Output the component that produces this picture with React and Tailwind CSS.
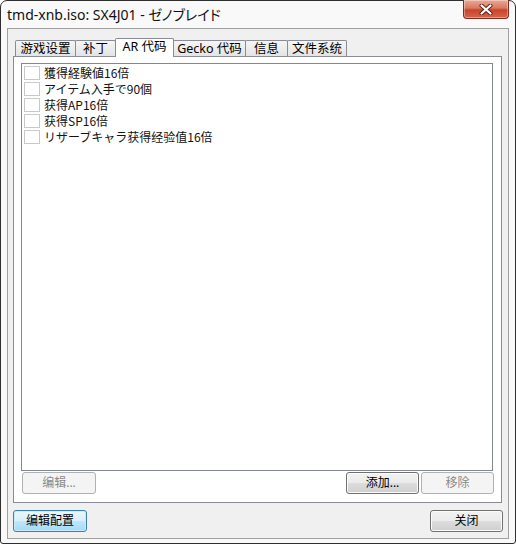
import React from 'react';

const tabs = [
  { label: '游戏设置', w: 61 },
  { label: '补丁', w: 41 },
  { label: 'AR 代码', w: 59, active: true },
  { label: 'Gecko 代码', w: 73 },
  { label: '信息', w: 43 },
  { label: '文件系统', w: 60 },
];

const codes = [
  '獲得経験値16倍',
  'アイテム入手で90個',
  '获得AP16倍',
  '获得SP16倍',
  'リザーブキャラ获得经验值16倍',
];

function CloseButton() {
  return (
    <div className="-mt-px mr-[6px] w-[46px] h-[19px] rounded-b-[4px] border border-t-0 border-[#7d2d1f] bg-[linear-gradient(#eba996,#dc7760_45%,#c5452c_55%,#d5664b)] shadow-[inset_0_0_0_1px_rgba(255,255,255,0.35)] flex items-center justify-center">
      <svg width="14" height="11" viewBox="0 0 14 11">
        <path d="M2.5 1.5 L11.5 9.5 M11.5 1.5 L2.5 9.5" stroke="#5a1f14" strokeWidth="4" strokeLinecap="round" />
        <path d="M2.5 1.5 L11.5 9.5 M11.5 1.5 L2.5 9.5" stroke="#ffffff" strokeWidth="2.2" strokeLinecap="round" />
      </svg>
    </div>
  );
}

function Button({ children, width, disabled, primary }) {
  let look = 'border-[#707070] bg-[linear-gradient(#f2f2f2_0%,#ebebeb_50%,#dddddd_50%,#cfcfcf_100%)] shadow-[inset_0_0_0_1px_#fcfcfc] text-black';
  if (disabled) look = 'border-[#adb2b5] bg-[#f4f4f4] text-[#8a8a8a]';
  if (primary) look = 'border-[#3c7fb1] bg-[linear-gradient(#eaf6fd_0%,#d9f0fc_50%,#bee6fd_50%,#a7d9f5_100%)] shadow-[inset_0_0_0_1px_#c9ecfd] text-black';
  return (
    <div
      className={`h-[22px] rounded-[3px] border flex items-center justify-center text-[12px] leading-none ${look}`}
      style={{ width }}
    >
      {children}
    </div>
  );
}

export default function App() {
  return (
    <div className="w-[516px] h-[546px] bg-white text-black font-['Noto_Sans','Noto_Sans_CJK_SC',sans-serif]">
      <div className="w-[516px] h-[544px] border border-[#2f2f2f] rounded-t-[7px] rounded-b-[3px] bg-[#f9f9f9] flex flex-col">
        {/* title bar */}
        <div className="h-[27px] shrink-0 flex items-start justify-between">
          <div className="pl-[6px] pt-[4px] text-[14px] leading-[18px] text-[#111]">
            tmd-xnb.iso: SX4J01 -{' '}
            <span className="font-['Noto_Sans_CJK_JP',sans-serif] [font-feature-settings:'palt']">ゼノブレイド</span>
          </div>
          <CloseButton />
        </div>

        {/* client area */}
        <div className="mx-[6px] h-[511px] border border-[#a0a0a0] bg-[#f0f0f0] flex flex-col">
          {/* tab strip */}
          <div className="h-[27px] shrink-0 flex items-end pl-[7px]">
            {tabs.map((t, i) => (
              <div
                key={t.label}
                className={
                  'flex items-center justify-center text-[12.5px] leading-none border border-b-0 border-[#898c95] rounded-t-[2px] ' +
                  (i > 0 ? '-ml-px ' : '') +
                  (t.active
                    ? 'relative z-10 h-[19px] -mb-px bg-white pb-[2px]'
                    : 'h-[16px] bg-[linear-gradient(#f5f5f5,#e4e4e4)] pt-px')
                }
                style={{ width: t.w }}
              >
                {t.label}
              </div>
            ))}
          </div>

          {/* tab panel */}
          <div className="ml-[5px] w-[489px] h-[447px] shrink-0 border border-[#898c95] bg-white flex flex-col">
            <div className="ml-[7px] mt-[6px] w-[472px] h-[408px] border border-[#828790] bg-white pt-[1px] pl-[2px]">
              {codes.map((c) => (
                <div key={c} className="h-[16px] flex items-center gap-[4px]">
                  <div className="w-[16px] h-[14px] border border-[#c9c9c9] bg-white" />
                  <span className="text-[12px] leading-none text-[#111] font-['Noto_Sans_CJK_SC',sans-serif]">{c}</span>
                </div>
              ))}
            </div>
            <div className="mt-[1px] flex items-center pl-[8px] pr-[7px]">
              <Button width={74} disabled>编辑...</Button>
              <div className="flex-1" />
              <Button width={73}>添加...</Button>
              <div className="w-[2px]" />
              <Button width={73} disabled>移除</Button>
            </div>
          </div>

          {/* bottom buttons */}
          <div className="mt-[7px] flex items-center px-[5px]">
            <Button width={74} primary>编辑配置</Button>
            <div className="flex-1" />
            <Button width={73}>关闭</Button>
          </div>
        </div>
      </div>
    </div>
  );
}
